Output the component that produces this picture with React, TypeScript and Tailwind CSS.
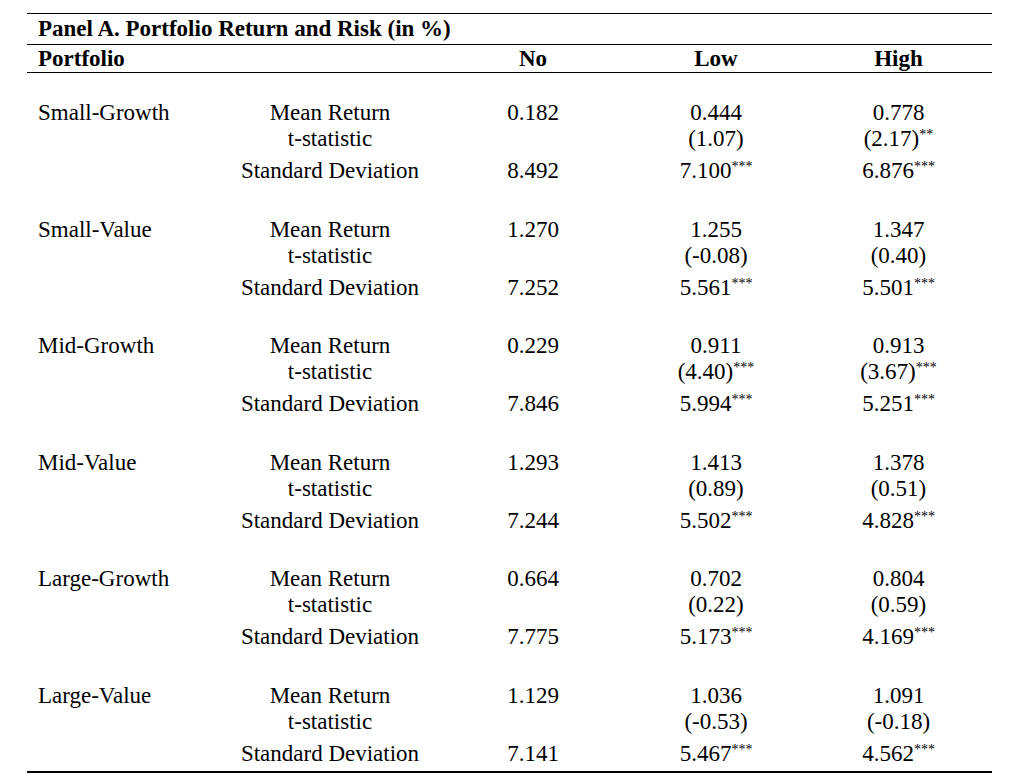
import React from "react";

type Cell = { v: string; s?: string };
type Group = { name: string; mean: string[]; t: (Cell | null)[]; sd: Cell[] };

const groups: Group[] = [
  {
    name: "Small-Growth",
    mean: ["0.182", "0.444", "0.778"],
    t: [null, { v: "(1.07)" }, { v: "(2.17)", s: "**" }],
    sd: [{ v: "8.492" }, { v: "7.100", s: "***" }, { v: "6.876", s: "***" }],
  },
  {
    name: "Small-Value",
    mean: ["1.270", "1.255", "1.347"],
    t: [null, { v: "(-0.08)" }, { v: "(0.40)" }],
    sd: [{ v: "7.252" }, { v: "5.561", s: "***" }, { v: "5.501", s: "***" }],
  },
  {
    name: "Mid-Growth",
    mean: ["0.229", "0.911", "0.913"],
    t: [null, { v: "(4.40)", s: "***" }, { v: "(3.67)", s: "***" }],
    sd: [{ v: "7.846" }, { v: "5.994", s: "***" }, { v: "5.251", s: "***" }],
  },
  {
    name: "Mid-Value",
    mean: ["1.293", "1.413", "1.378"],
    t: [null, { v: "(0.89)" }, { v: "(0.51)" }],
    sd: [{ v: "7.244" }, { v: "5.502", s: "***" }, { v: "4.828", s: "***" }],
  },
  {
    name: "Large-Growth",
    mean: ["0.664", "0.702", "0.804"],
    t: [null, { v: "(0.22)" }, { v: "(0.59)" }],
    sd: [{ v: "7.775" }, { v: "5.173", s: "***" }, { v: "4.169", s: "***" }],
  },
  {
    name: "Large-Value",
    mean: ["1.129", "1.036", "1.091"],
    t: [null, { v: "(-0.53)" }, { v: "(-0.18)" }],
    sd: [{ v: "7.141" }, { v: "5.467", s: "***" }, { v: "4.562", s: "***" }],
  },
];

const row = "grid grid-cols-[203px_200px_206px_160px_196px] leading-[27px]";

function Val({ c }: { c: Cell | null }) {
  if (!c) return null;
  return (
    <>
      {c.v}
      {c.s && <sup className="text-[14px] -top-[7px]">{c.s}</sup>}
    </>
  );
}

function Row({ name, label, cells, h }: { name?: string; label: string; cells: (Cell | null)[]; h: string }) {
  return (
    <div className={`${row} ${h}`}>
      <div className="pl-[11px]">{name}</div>
      <div className="text-center">{label}</div>
      <div className="text-center"><Val c={cells[0]} /></div>
      <div className="text-center"><Val c={cells[1]} /></div>
      <div className="text-center pl-[9px]"><Val c={cells[2]} /></div>
    </div>
  );
}

export default function App() {
  return (
    <div className="min-h-screen bg-white text-black pt-[13px]" style={{ fontFamily: '"Liberation Serif", "Times New Roman", serif' }}>
      <div className="ml-[27px] w-[965px] text-[23px]">
        <div className="border-t border-black h-[31px] leading-[30px] font-bold pl-[11px]">
          Panel A. Portfolio Return and Risk (in %)
        </div>
        <div className={`${row} border-t border-b border-black h-[29px] font-bold`}>
          <div className="pl-[11px]">Portfolio</div>
          <div></div>
          <div className="text-center">No</div>
          <div className="text-center">Low</div>
          <div className="text-center pl-[9px]">High</div>
        </div>
        <div className="flex flex-col gap-[31.5px] pt-[26px] pb-[4.5px] border-b-2 border-black">
          {groups.map((g) => (
            <div key={g.name} className="h-[85px]">
              <Row name={g.name} label="Mean Return" cells={g.mean.map((v) => ({ v }))} h="h-[26px]" />
              <Row label="t-statistic" cells={g.t} h="h-[32px]" />
              <Row label="Standard Deviation" cells={g.sd} h="h-[27px]" />
            </div>
          ))}
        </div>
      </div>
    </div>
  );
}
